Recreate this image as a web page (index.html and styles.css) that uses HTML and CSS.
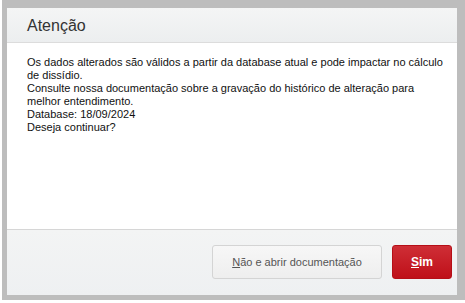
FILE: index.html
```html
<!DOCTYPE html>
<html lang="pt-BR">
<head>
<meta charset="utf-8">
<link rel="stylesheet" href="styles.css">
</head>
<body>
<div class="dialog">
  <div class="header"><h1 class="title">Atenção</h1></div>
  <div class="body">
    <p>Os dados alterados são válidos a partir da database atual e pode impactar no cálculo de dissídio.</p>
    <p>Consulte nossa documentação sobre a gravação do histórico de alteração para melhor entendimento.</p>
    <p>Database: 18/09/2024</p>
    <p>Deseja continuar?</p>
  </div>
  <div class="footer">
    <button class="btn btn-default"><u>N</u>ão e abrir documentação</button>
    <button class="btn btn-primary"><u>S</u>im</button>
  </div>
</div>
</body>
</html>
```
FILE: styles.css
```css
html, body { margin: 0; padding: 0; background: #fff; }
body { font-family: "Liberation Sans", Arial, sans-serif; }
.dialog {
  margin-left: 2px;
  width: 463px;
  height: 300px;
  box-sizing: border-box;
  border-style: solid;
  border-color: #bdbdbd;
  border-width: 8px 8px 5px 5px;
  display: flex;
  flex-direction: column;
  background: #fff;
}
.header {
  height: 34px;
  background: linear-gradient(#f4f5f5, #eceeef);
  border-bottom: 1px solid #dcdcdc;
  display: flex;
  align-items: center;
  padding-left: 20px;
}
.title {
  margin: 0;
  font-weight: normal;
  font-size: 16px;
  color: #333;
  padding-top: 2px;
}
.body {
  flex: 1;
  padding: 13px 12px 0 20px;
  font-size: 11px;
  line-height: 13px;
  color: #111;
}
.body p { margin: 0; }
.footer {
  height: 66px;
  border-top: 1px solid #d6d6d6;
  background: linear-gradient(#f3f4f4, #eef0f2);
  display: flex;
  justify-content: flex-end;
  align-items: flex-start;
  gap: 10px;
  padding: 15px 5px 0 0;
  box-sizing: border-box;
}
.btn {
  height: 34px;
  border-radius: 3px;
  font-family: "Liberation Sans", Arial, sans-serif;
  cursor: pointer;
  box-sizing: border-box;
}
.btn-default {
  width: 170px;
  font-size: 11px;
  color: #555;
  background: linear-gradient(#f7f7f7, #eeeeee);
  border: 1px solid #d4d4d4;
}
.btn-primary {
  width: 60px;
  font-size: 12px;
  font-weight: bold;
  color: #fff;
  background: linear-gradient(#cf2e36, #bf1019);
  border: 1px solid #b50f17;
}
```
